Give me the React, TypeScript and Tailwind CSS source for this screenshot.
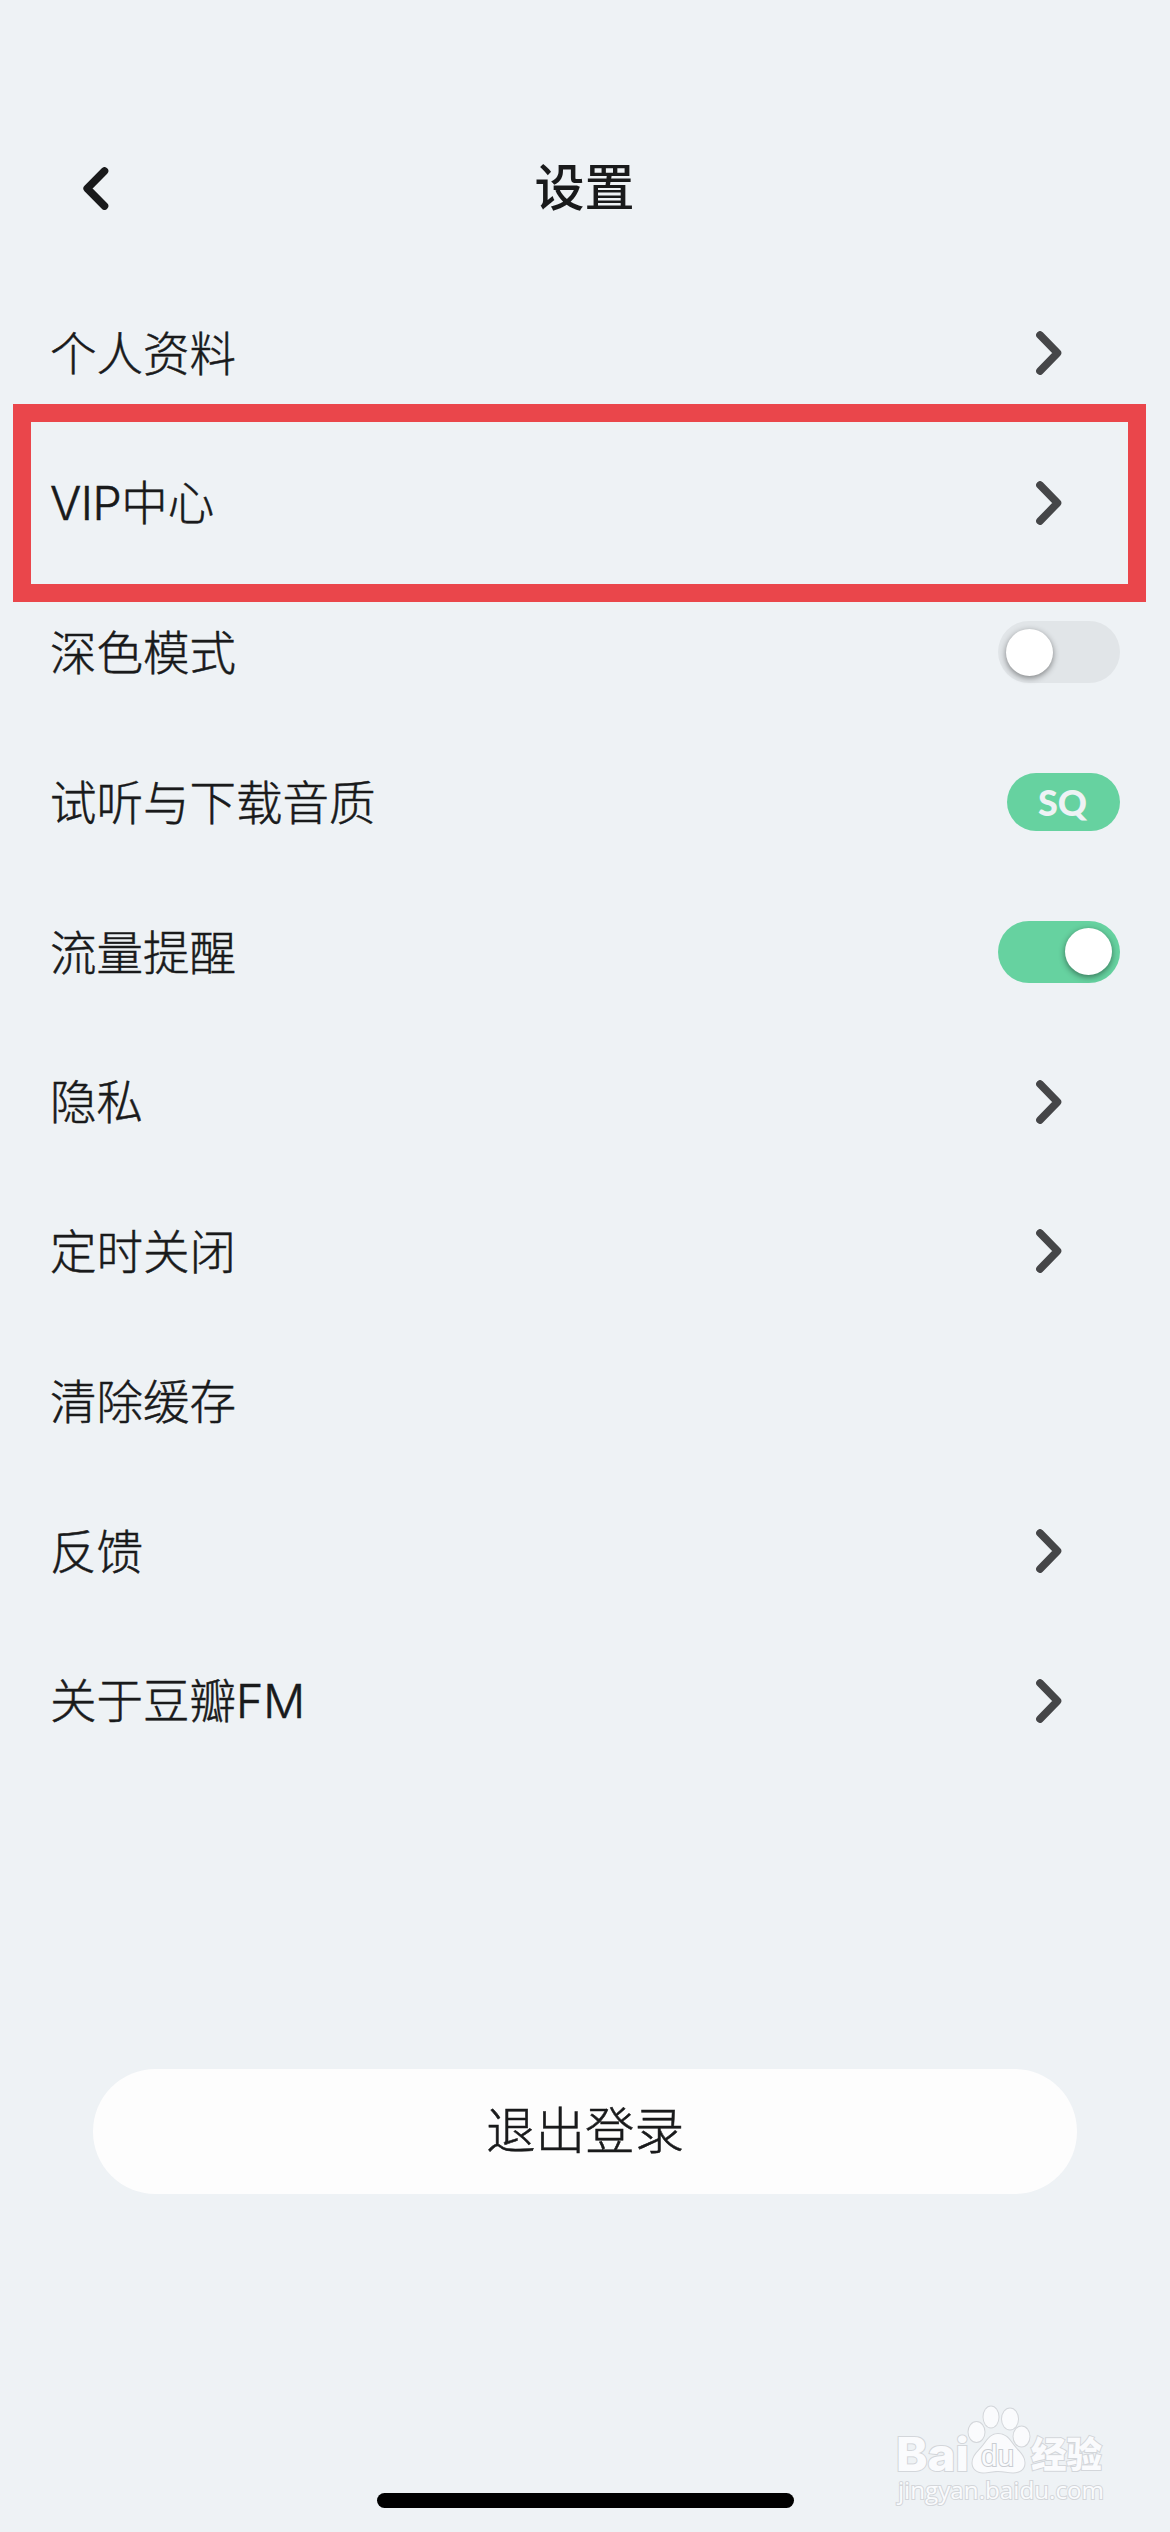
import React from 'react';

type RowKind = 'link' | 'switch' | 'badge' | 'plain';

interface SettingRow {
  id: string;
  latinStart?: string;
  label: string;
  latinEnd?: string;
  kind: RowKind;
  on?: boolean;
  badge?: string;
  highlighted?: boolean;
}

const settings: SettingRow[] = [
  { id: 'profile', label: '个人资料', kind: 'link' },
  { id: 'vip', latinStart: 'VIP', label: '中心', kind: 'link', highlighted: true },
  { id: 'dark', label: '深色模式', kind: 'switch', on: false },
  { id: 'quality', label: '试听与下载音质', kind: 'badge', badge: 'SQ' },
  { id: 'traffic', label: '流量提醒', kind: 'switch', on: true },
  { id: 'privacy', label: '隐私', kind: 'link' },
  { id: 'timer', label: '定时关闭', kind: 'link' },
  { id: 'cache', label: '清除缓存', kind: 'plain' },
  { id: 'feedback', label: '反馈', kind: 'link' },
  { id: 'about', label: '关于豆瓣', latinEnd: 'FM', kind: 'link' },
];

const Chevron: React.FC = () => (
  <svg className="mr-[58px] h-11 w-[26px]" viewBox="0 0 26 44" fill="none">
    <path d="M4 4 L21.5 22 L4 40" stroke="#454648" strokeWidth="7.6" strokeLinecap="round" strokeLinejoin="round" />
  </svg>
);

const Switch: React.FC<{ on?: boolean }> = ({ on }) => (
  <div
    className={`flex h-[62px] w-[122px] items-center rounded-full px-2 ${
      on ? 'justify-end bg-[#66d2a0]' : 'justify-start bg-[#e1e5e8]'
    }`}
  >
    <div className="h-[47px] w-[47px] rounded-full bg-white shadow-[0_2px_6px_rgba(0,0,0,0.45)]" />
  </div>
);

const Row: React.FC<{ item: SettingRow }> = ({ item }) => (
  <li className="relative flex h-[149.75px] items-center justify-between pl-[50px] pr-[50px]">
    {item.highlighted && (
      <div className="absolute left-[13px] right-6 -top-[24px] h-[198px] border-[18px] border-[#ea464b]" />
    )}
    <span className="pb-1 text-[46.5px] leading-none font-light whitespace-nowrap [-webkit-text-stroke:0.5px_#191a1b]">
      {item.latinStart && <span className="font-['Inter'] leading-[0] tracking-[-0.5px]">{item.latinStart}</span>}
      {item.label}
      {item.latinEnd && <span className="font-['Inter'] leading-[0]">{item.latinEnd}</span>}
    </span>
    {item.kind === 'link' && <Chevron />}
    {item.kind === 'switch' && <Switch on={item.on} />}
    {item.kind === 'badge' && (
      <span className="flex h-[58px] w-[113px] items-center justify-center rounded-full bg-[#66d2a0] pr-0.5 pb-px font-['Lato'] text-[36px] leading-none font-black text-[#eef2f5]">
        {item.badge}
      </span>
    )}
  </li>
);

const Watermark: React.FC = () => (
  <svg
    className="absolute left-[890px] top-[2400px] h-[112px] w-[224px]"
    viewBox="890 2400 224 112"
    fill="#fafbfd"
    stroke="#d3d6da"
    strokeWidth="2"
    paintOrder="stroke"
  >
    <text x="896" y="2471" fontFamily="Inter" fontWeight="800" fontSize="46" textLength="73" lengthAdjust="spacingAndGlyphs">
      Bai
    </text>
    <ellipse cx="976.5" cy="2432" rx="8" ry="10" />
    <ellipse cx="991" cy="2417" rx="7.5" ry="10.5" />
    <ellipse cx="1010" cy="2419" rx="8" ry="10.5" />
    <ellipse cx="1021.5" cy="2436.5" rx="8" ry="10" />
    <path d="M998 2434 c9 0 12 7 17 13 c5 6 9.500 9 9.500 16 c0 7 -6 9.500 -11.500 9.500 c-5 0 -9 -1.500 -15 -1.500 c-6 0 -9 1.500 -15 1.500 c-6 0 -10.500 -4 -10.500 -9.500 c0 -7 4.500 -10 9.500 -16 c5 -6 8 -13 16 -13 z" />
    <text x="981" y="2466" fontFamily="Liberation Sans" fontSize="29" stroke="#c9cdd2" textLength="33" lengthAdjust="spacingAndGlyphs">
      du
    </text>
    <text x="1031" y="2468" fontFamily="Noto Sans CJK SC" fontWeight="900" fontSize="36" textLength="71" lengthAdjust="spacingAndGlyphs">
      经验
    </text>
    <text x="898" y="2499" fontFamily="Open Sans" fontSize="24" textLength="206" lengthAdjust="spacingAndGlyphs">
      jingyan.baidu.com
    </text>
  </svg>
);

const App: React.FC = () => {
  return (
    <div className="relative flex h-[2532px] w-[1170px] flex-col items-center overflow-hidden bg-[#eef2f5] font-['Noto_Sans_CJK_SC',sans-serif] text-[#191a1b]">
      <header className="mt-[138px] flex h-[100px] w-full shrink-0 items-center justify-between pl-[83px] pr-[84px]">
        <svg className="h-[43px] w-[26px]" viewBox="0 0 26 43" fill="none">
          <path d="M21.5 4 L4.2 21.5 L21.5 39" stroke="#191a1b" strokeWidth="7.6" strokeLinecap="round" strokeLinejoin="round" />
        </svg>
        <h1 className="pb-2 text-[50px] leading-none font-medium">设置</h1>
        <div className="w-[26px]" />
      </header>

      <ul className="mt-[40px] w-full shrink-0">
        {settings.map((item) => (
          <Row key={item.id} item={item} />
        ))}
      </ul>

      <button className="mt-[293.5px] h-[125px] w-[984px] shrink-0 rounded-full bg-[#fdfdfd] pb-2 text-[49.5px] leading-none font-light [-webkit-text-stroke:0.5px_#191a1b]">
        退出登录
      </button>

      <div className="mt-auto mb-6 h-[15px] w-[417px] shrink-0 rounded-full bg-black" />

      <Watermark />
    </div>
  );
};

export default App;
